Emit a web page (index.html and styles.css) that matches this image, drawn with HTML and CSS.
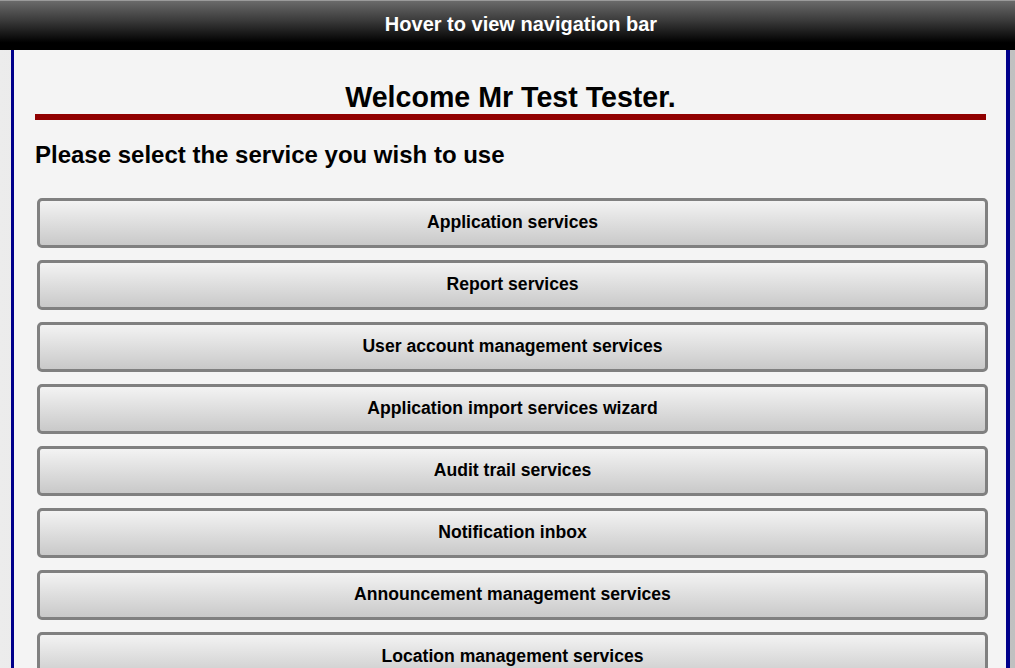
FILE: index.html
```html
<!DOCTYPE html>
<html>
<head>
<meta charset="utf-8">
<link rel="stylesheet" href="styles.css">
</head>
<body>
<div class="navbar">Hover to view navigation bar</div>
<div class="page">
  <main class="content">
    <h1 class="welcome">Welcome Mr Test Tester.</h1>
    <h2 class="prompt">Please select the service you wish to use</h2>
    <div class="services">
      <button class="service">Application services</button>
      <button class="service">Report services</button>
      <button class="service">User account management services</button>
      <button class="service">Application import services wizard</button>
      <button class="service">Audit trail services</button>
      <button class="service">Notification inbox</button>
      <button class="service">Announcement management services</button>
      <button class="service">Location management services</button>
    </div>
  </main>
</div>
</body>
</html>
```

FILE: styles.css
```css
html, body {
  margin: 0;
  padding: 0;
}
body {
  font-family: "Liberation Sans", Arial, sans-serif;
  background: linear-gradient(to right, #ececec, #c0c0c0);
  overflow: hidden;
  height: 668px;
}
.navbar {
  height: 50px;
  box-sizing: border-box;
  border-top: 1px solid #9a9a9a;
  background: linear-gradient(to bottom, #6a6a6a 0%, #3a3a3a 40%, #000 85%, #000 100%);
  color: #fff;
  font-weight: bold;
  font-size: 20px;
  text-align: center;
  line-height: 46px;
  padding-left: 27px;
}
.page {
  display: flex;
  padding: 0 5px 0 11px;
}
.content {
  flex: 1;
  background: #f4f4f4;
  border-left: 3px solid #00008b;
  border-right: 4px solid #00008b;
  padding: 0 20px 0 21px;
  min-height: 700px;
}
.welcome {
  margin: 0;
  padding-top: 32px;
  font-size: 28.6px;
  line-height: 30px;
  text-align: center;
  border-bottom: 6px solid #900000;
  padding-bottom: 2px;
}
.prompt {
  margin: 22px 0 0 0;
  font-size: 24px;
  line-height: 26px;
}
.services {
  display: flex;
  flex-direction: column;
  gap: 12px;
  margin: 30px -2px 0 2px;
}
.service {
  height: 50px;
  box-sizing: border-box;
  border: 3px solid #808080;
  border-radius: 5px;
  background: linear-gradient(to bottom, #f3f3f3, #c9c9c9);
  font-family: "Liberation Sans", Arial, sans-serif;
  font-weight: bold;
  font-size: 17.6px;
  color: #000;
  padding: 0 0 2px 0;
}
```
